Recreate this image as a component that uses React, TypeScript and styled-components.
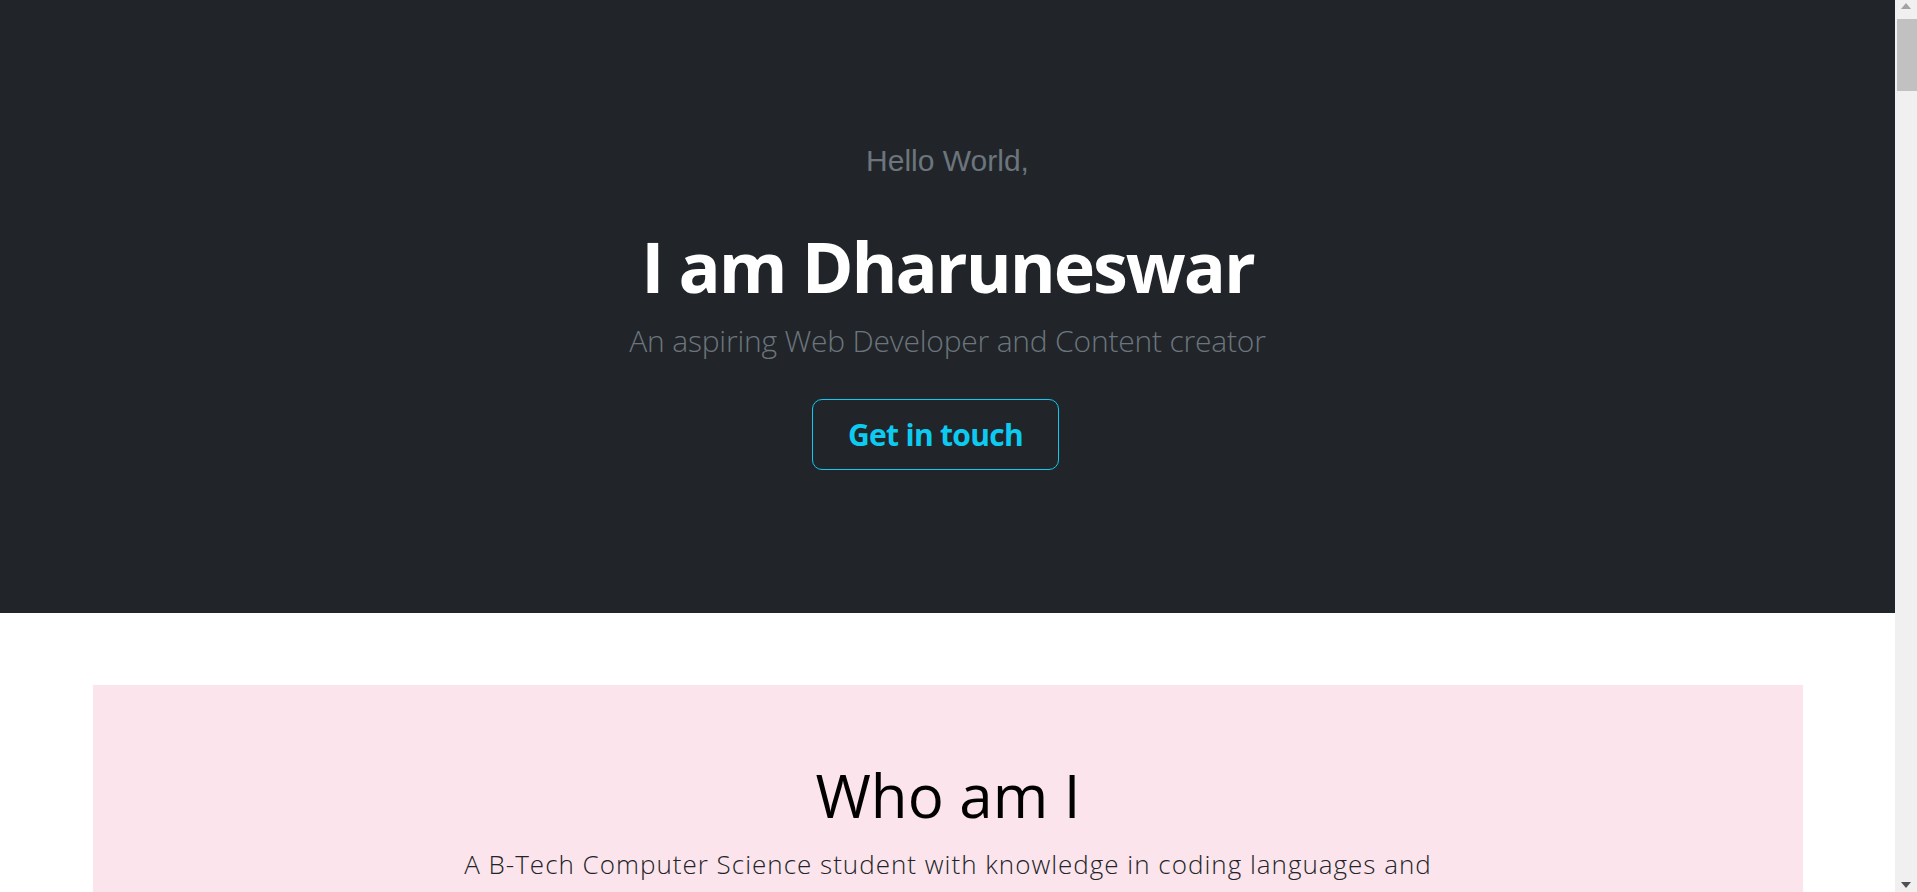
import React from "react";
import styled, { createGlobalStyle } from "styled-components";

const GlobalStyle = createGlobalStyle`
  html, body {
    margin: 0;
    padding: 0;
    background: #ffffff;
    overflow: hidden;
  }
  body {
    font-family: "Open Sans", "Noto Sans", sans-serif;
    color: #212529;
  }
  *, *::before, *::after { box-sizing: border-box; }
`;

const Frame = styled.div`
  display: flex;
  height: 100vh;
`;

const Page = styled.main`
  flex: 1;
  min-width: 0;
  overflow: hidden;
`;

const ScrollTrack = styled.div`
  width: 22px;
  flex: none;
  background: #f0f0f0;
  display: flex;
  flex-direction: column;
  align-items: flex-end;
`;

const ArrowButton = styled.div<{ $dir: "up" | "down" }>`
  width: 22px;
  height: ${(p) => (p.$dir === "up" ? "19px" : "13px")};
  display: flex;
  justify-content: center;
  align-items: flex-start;
  padding-top: 3px;
  margin-top: ${(p) => (p.$dir === "down" ? "auto" : "0")};

  &::before {
    content: "";
    width: 0;
    height: 0;
    border-left: 5.5px solid transparent;
    border-right: 5.5px solid transparent;
    ${(p) =>
      p.$dir === "up"
        ? "border-bottom: 6px solid #a3a3a3;"
        : "border-top: 6px solid #505050;"}
  }
`;

const Thumb = styled.div`
  width: 20px;
  height: 72px;
  background: #c1c1c1;
`;

const Hero = styled.header`
  height: 613px;
  background: #212529;
  display: flex;
  flex-direction: column;
  align-items: center;
  padding-top: 143px;
  text-align: center;
`;

const Greeting = styled.h4`
  margin: 0;
  font-family: "Liberation Sans", Arial, sans-serif;
  font-weight: 400;
  font-size: 30px;
  line-height: 36px;
  color: #6c757d;
`;

const Title = styled.h1`
  margin: 45px 0 0;
  font-family: "Open Sans", sans-serif;
  font-weight: 700;
  font-size: 70px;
  line-height: 84px;
  color: #ffffff;
  letter-spacing: -2px;
`;

const Lead = styled.p`
  margin: 10px 0 0;
  font-family: "Open Sans", sans-serif;
  font-weight: 300;
  font-size: 30px;
  line-height: 45px;
  color: #6c757d;
  letter-spacing: -0.2px;
`;

const OutlineButton = styled.a`
  margin: 36px 24px 0 0;
  display: inline-block;
  padding: 12px 35px;
  border: 1px solid #0dcaf0;
  border-radius: 10px;
  font-family: "Open Sans", sans-serif;
  font-weight: 700;
  font-size: 30px;
  line-height: 45px;
  color: #0dcaf0;
  letter-spacing: -0.7px;
  text-decoration: none;
  cursor: pointer;
`;

const AboutSection = styled.section`
  padding: 72px 92px 72px 93px;
`;

const AboutCard = styled.div`
  background: #fce4ec;
  padding: 74px 40px 80px;
  display: flex;
  flex-direction: column;
  align-items: center;
  text-align: center;
`;

const SectionTitle = styled.h2`
  margin: 0;
  font-family: "Open Sans", sans-serif;
  font-weight: 400;
  font-size: 60px;
  line-height: 72px;
  color: #000000;
`;

const AboutText = styled.p`
  margin: 14px 0 0;
  max-width: 1010px;
  font-family: "Open Sans", sans-serif;
  font-weight: 300;
  font-size: 26px;
  line-height: 38px;
  letter-spacing: 1px;
  color: #212529;
`;

export default function App() {
  return (
    <Frame>
      <GlobalStyle />
      <Page>
        <Hero>
          <Greeting>Hello World,</Greeting>
          <Title>I am Dharuneswar</Title>
          <Lead>An aspiring Web Developer and Content creator</Lead>
          <OutlineButton>Get in touch</OutlineButton>
        </Hero>
        <AboutSection>
          <AboutCard>
            <SectionTitle>Who am I</SectionTitle>
            <AboutText>
              A B-Tech Computer Science student with knowledge in coding languages and
              web development, who loves building things for the web and sharing what
              he learns through content creation.
            </AboutText>
          </AboutCard>
        </AboutSection>
      </Page>
      <ScrollTrack aria-hidden="true">
        <ArrowButton $dir="up" />
        <Thumb />
        <ArrowButton $dir="down" />
      </ScrollTrack>
    </Frame>
  );
}
